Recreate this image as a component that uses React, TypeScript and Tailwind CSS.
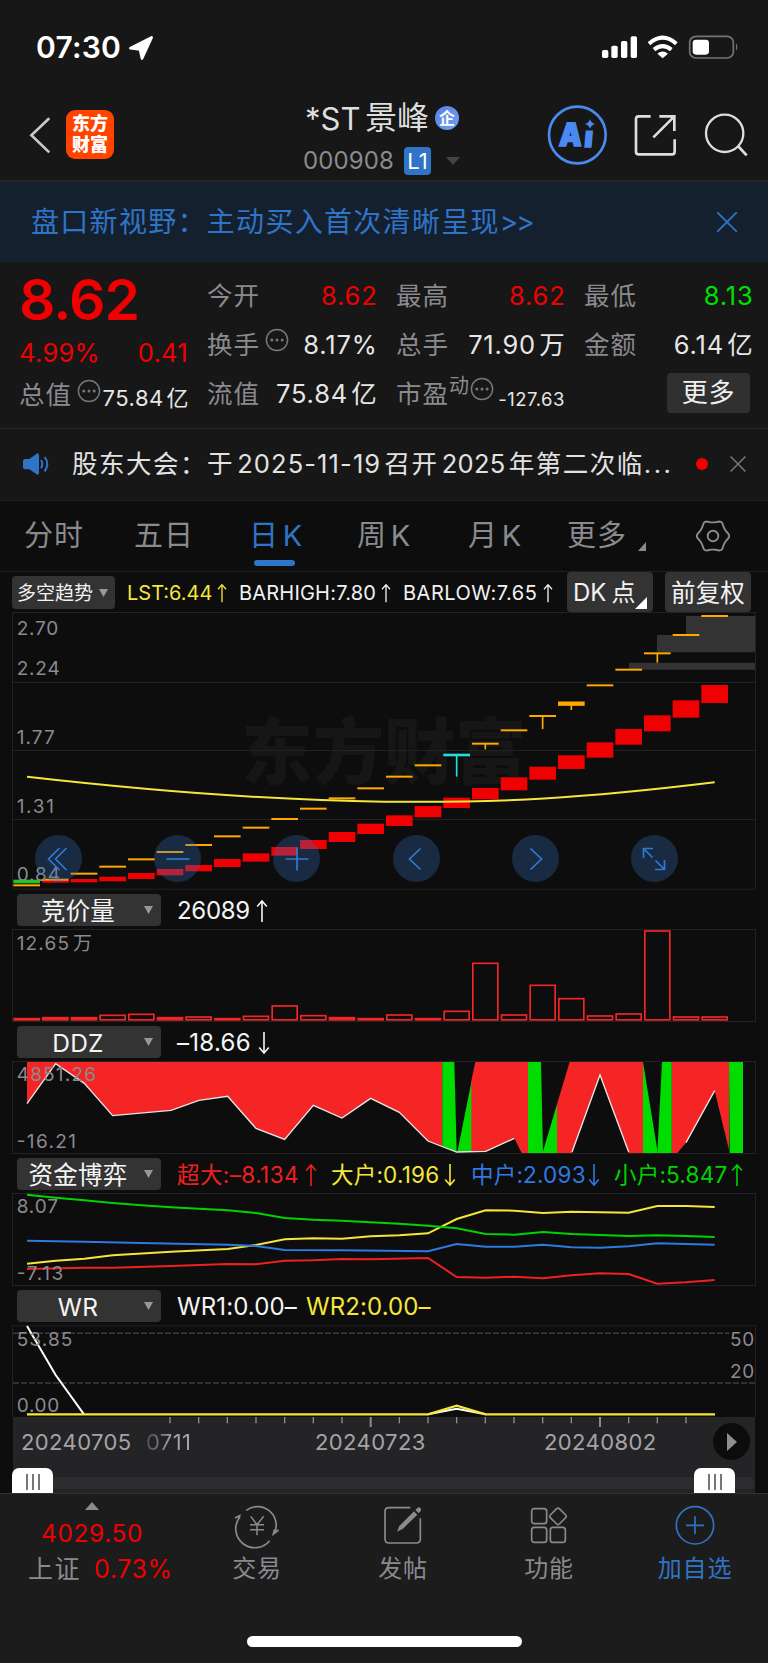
import React from "react";

const ORANGE_Y = [1156, 1139, 1121, 1100, 1078, 1056, 1035, 1009, 983, 957, 926, 895, 865, 830, 796, 765, 731, 691, 648, 611, 556, 509, 460, 405, 348];
const STEMS: Record<number, number> = { 15: 830, 16: 748, 18: 687, 19: 630, 22: 488 };
const TREND: [number, number][] = [
  [1139, 1150], [1139, 1148], [1137, 1147], [1130, 1144], [1119, 1137], [1107, 1126], [1095, 1114], [1077, 1101], [1060, 1085],
  [1041, 1067], [1020, 1047], [996, 1026], [971, 1002], [946, 978], [918, 952], [893, 924], [864, 898], [832, 871], [800, 839],
  [766, 807], [727, 773], [687, 734], [646, 694], [601, 653], [555, 609],
];
const VOLUME = [384, 381, 381, 374, 371, 381, 379, 384, 377, 346, 375, 381, 384, 373, 384, 362, 218, 373, 284, 324, 376, 370, 121, 379, 379];
const cx = (i: number) => 80 + 86 * i;

const GEAR = Array.from({ length: 72 }, (_, k) => {
  const a = (k * Math.PI) / 36;
  const r = 14.7 + 1.3 * Math.cos(6 * a) + 0.25 * Math.cos(12 * a);
  return `${(17 + r * Math.cos(a)).toFixed(2)},${(17 + r * Math.sin(a)).toFixed(2)}`;
}).join(" ");

const label = "fill-[#8a8a8f]";
const sans = "Inter, 'Noto Sans CJK SC', sans-serif";

function Txt({ x, y, w, size = 57, fill, children }: { x: number; y: number; w?: number; size?: number; fill?: string; children: string }) {
  return (
    <text x={x} y={y} fontSize={size} fontFamily={sans} textLength={w} className={fill ?? label}>
      {children}
    </text>
  );
}

function Frame({ top, bottom }: { top: number; bottom: number }) {
  return <rect x={37.5} y={top} width={2229} height={bottom - top} fill="none" stroke="#222224" strokeWidth={3} />;
}

function Dots({ className = "" }: { className?: string }) {
  return (
    <svg viewBox="0 0 24 24" className={"h-6 w-6 shrink-0 text-[#77777b] " + className} fill="none" stroke="currentColor" strokeWidth={1.5}>
      <circle cx={12} cy={12} r={10.6} />
      <g fill="currentColor" stroke="none">
        <circle cx={6.8} cy={12} r={1.5} />
        <circle cx={12} cy={12} r={1.5} />
        <circle cx={17.2} cy={12} r={1.5} />
      </g>
    </svg>
  );
}

function Arrow({ down = false, className = "h-6 w-3" }: { down?: boolean; className?: string }) {
  return (
    <svg viewBox="0 0 12 24" className={"shrink-0 " + className} fill="none" stroke="currentColor" strokeWidth={1.6}>
      {down ? <path d="M6 1v21M1.2 16.5 6 22l4.8-5.5" /> : <path d="M6 23V2M1.2 7.5 6 2l4.8 5.5" />}
    </svg>
  );
}

function StatusBar() {
  return (
    <div className="flex h-[92px] items-start justify-between pl-9 pr-7 pt-[32px] text-white">
      <div className="flex items-center">
        <span className="w-[91px] text-[30px] font-semibold leading-[30px] tracking-[0.2px]">07:30</span>
        <svg viewBox="384 102 78 80" className="ml-px h-[27px] w-[26px]" fill="white" stroke="white" strokeWidth={8} strokeLinejoin="round">
          <path d="M391 144 455 112 426 175 420 148Z" />
        </svg>
      </div>
      <svg viewBox="1800 102 420 78" className="mt-[2px] h-[26px] w-[140px]" fill="white">
        <rect x={1806} y={150} width={19} height={24} rx={5} />
        <rect x={1834} y={137} width={19} height={37} rx={5} />
        <rect x={1863} y={123} width={19} height={51} rx={5} />
        <rect x={1892} y={109} width={19} height={65} rx={5} />
        <g fill="none" stroke="white" strokeWidth={12}>
          <path d="M1947 131Q1988 95 2029 131" />
          <path d="M1962 149Q1988 128 2014 149" />
        </g>
        <path d="M1972 161Q1988 148 2004 161L1988 175Z" />
        <rect x={2069} y={109} width={131} height={65} rx={19} fill="none" stroke="#747474" strokeWidth={5} />
        <rect x={2078} y={119} width={49} height={45} rx={10} />
        <path d="M2208 129Q2216 141 2208 153Z" fill="#747474" />
      </svg>
    </div>
  );
}

function Header() {
  return (
    <header className="flex h-[88px] items-start text-[#dedede]">
      <svg viewBox="84 348 72 118" className="ml-[28px] mt-[24px] h-[39px] w-6" fill="none" stroke="#c9c9c9" strokeWidth={8}>
        <path d="M148 355 94 406 148 458" />
      </svg>
      <div className="ml-[14px] mt-[18px] flex h-[49px] w-[48px] flex-col items-center justify-center rounded-[9px] bg-[#ff4400] text-[18px] font-black leading-[20.5px] text-white">
        <span>东方</span>
        <span>财富</span>
      </div>
      <div className="ml-[180px] w-[180px] pt-[9px]">
        <div className="flex h-[34px] items-center pl-[11px]">
          <span className="w-[60px] text-[31px] leading-none">*ST</span>
          <span className="text-[32px] leading-none">景峰</span>
          <span className="ml-[6px] flex h-6 w-6 items-center justify-center rounded-full bg-gradient-to-br from-[#5b7fe6] to-[#6fa0f2] text-[16px] font-bold leading-none text-white">企</span>
        </div>
        <div className="mt-[12px] flex h-7 items-center pl-[9px]">
          <span className="w-[101px] text-[24px] leading-none tracking-[0.1px] text-[#8a8a8f]">000908</span>
          <span className="flex h-7 w-[27px] items-center justify-center rounded-[4px] bg-[#2f74c6] text-[22px] leading-none text-white">L1</span>
          <svg viewBox="0 0 14 8" className="ml-[15px] h-2 w-[14px] fill-[#444]"><path d="M0 0H14L7 8Z" /></svg>
        </div>
      </div>
      <svg viewBox="1641 315 180 180" className="ml-[73px] mt-[13px] h-[60px] w-[60px]">
        <circle cx={1732} cy={405} r={85} fill="none" stroke="#4a8af0" strokeWidth={8} />
        <g fill="#4a8af0" stroke="#4a8af0" strokeWidth={5} fontFamily={sans} fontWeight={900}>
          <text x={1676} y={437} fontSize={96} textLength={68} lengthAdjust="spacingAndGlyphs" transform="skewX(-3) translate(23 0)">A</text>
          <text x={1752} y={440} fontSize={86} transform="skewX(-5) translate(38 0)">ı</text>
        </g>
        <path d="M1770 357Q1773 369 1785 372Q1773 375 1770 387Q1767 375 1755 372Q1767 369 1770 357Z" fill="#4a8af0" />
      </svg>
      <svg viewBox="1896 339 138 138" className="ml-[25px] mt-[21px] h-[46px] w-[46px]" fill="none" stroke="#dedede" strokeWidth={8}>
        <path d="M1952 349H1916Q1908 349 1908 357V455Q1908 463 1916 463H2016Q2024 463 2024 455V418M1978 349H2023V393M2023 349 1960 412" />
      </svg>
      <svg viewBox="2109 333 138 138" className="ml-[25px] mt-[19px] h-[46px] w-[46px]" fill="none" stroke="#dedede" strokeWidth={7}>
        <circle cx={2174} cy={400} r={56} />
        <path d="M2214 438 2240 466" strokeWidth={8} />
      </svg>
    </header>
  );
}

function Pair({ name, value, color = "text-[#e6e6e6]", dots = false }: { name: string; value: string; color?: string; dots?: boolean }) {
  return (
    <div className="flex h-[49px] items-center justify-between text-[25.5px] leading-none">
      <span className="flex items-center tracking-[1px] text-[#8a8a8f]">
        {name}
        {dots && <Dots className="-mt-[9px] ml-[5px]" />}
      </span>
      <span className={"-mr-[1.5px] tracking-[0.8px] " + color}>{value}</span>
    </div>
  );
}

function Quote() {
  return (
    <section className="flex h-[167px] border-b border-[#262626] pl-[19px] pt-[9px]">
      <div className="w-[169px]">
        <div className="h-[58px] text-[57px] font-semibold leading-[58px] tracking-[-0.9px] text-[#f00000]">8.62</div>
        <div className="flex h-12 items-center justify-between text-[25.5px] leading-none tracking-[0.3px] text-[#f00000]">
          <span>4.99%</span>
          <span>0.41</span>
        </div>
        <div className="flex h-9 items-center leading-none">
          <span className="flex items-center text-[25.5px] tracking-[1px] text-[#8a8a8f]">
            总值
            <Dots className="-mt-[9px] ml-[5px]" />
          </span>
          <span className="-mr-px ml-auto mt-[5px] text-[22px] tracking-[0.5px] text-[#e6e6e6]">75.84亿</span>
        </div>
      </div>
      <div className="ml-[19px] w-[169px]">
        <Pair name="今开" value="8.62" color="text-[#f00000]" />
        <Pair name="换手" value="8.17%" dots />
        <Pair name="流值" value="75.84亿" />
      </div>
      <div className="ml-[20px] w-[168px]">
        <Pair name="最高" value="8.62" color="text-[#f00000]" />
        <Pair name="总手" value="71.90万" />
        <div className="flex h-[49px] items-center leading-none text-[#8a8a8f]">
          <span className="text-[25.5px] tracking-[1px]">市盈</span>
          <span className="-mt-[15px] text-[20px]">动</span>
          <Dots className="-mt-[9px] ml-[1px]" />
          <span className="-mr-px ml-auto mt-[11px] text-[18.5px] tracking-[0.5px] text-[#e6e6e6]">-127.63</span>
        </div>
      </div>
      <div className="ml-[20px] w-[168px]">
        <Pair name="最低" value="8.13" color="text-[#00e000]" />
        <Pair name="金额" value="6.14亿" />
        <button className="ml-[83px] mt-[4px] flex h-10 w-[83px] items-center justify-center rounded-[4px] bg-[#303030] text-[26px] leading-none tracking-[0.8px] text-[#f0f0f0]">更多</button>
      </div>
    </section>
  );
}

function Tabs() {
  return (
    <nav className="flex h-[71px] items-center border-b border-[#202022] bg-[#0d0d0d] pb-[1px] pl-[24px] text-[29px] leading-none tracking-[1px] text-[#8a8a8f]">
      <span className="w-[110px]">分时</span>
      <span className="w-[115px]">五日</span>
      <span className="relative w-[108px] text-[#2f74c6]">
        日K
        <span className="absolute left-[5px] top-[39px] h-[6px] w-[41px] rounded-full bg-[#2f74c6]" />
      </span>
      <span className="w-[111px]">周K</span>
      <span className="w-[99px]">月K</span>
      <span className="w-[71px]">更多</span>
      <svg viewBox="0 0 8 9" className="mt-[22px] h-[9px] w-2 fill-[#8a8a8f]"><path d="M8 0V9H0Z" /></svg>
      <svg viewBox="0 0 34 34" className="ml-[50px] h-[34px] w-[34px]" fill="none" stroke="#8a8a8f" strokeWidth={1.9} strokeLinejoin="round">
        <polygon points={GEAR} />
        <circle cx={17} cy={17} r={5.3} />
      </svg>
    </nav>
  );
}

function IndicatorRow() {
  return (
    <div className="flex h-10 items-center text-[20px] leading-none tracking-[0.1px] text-[#f2f2f2]">
      <button className="ml-3 flex h-[33px] w-[103px] items-center rounded-[4px] bg-[#333] pl-[5px] pt-[2px] text-[19px] tracking-[0px]">
        多空趋势
        <svg viewBox="0 0 9 8" className="ml-[6px] h-2 w-[9px] fill-[#98989c]"><path d="M0 0H9L4.5 8Z" /></svg>
      </button>
      <span className="ml-3 flex w-[112px] items-center pt-[2px] text-[#f5e63c]"><span className="w-[90px] tracking-[0px]">LST:6.44</span><Arrow className="h-5 w-[10px]" /></span>
      <span className="flex w-[164px] items-center pt-[2px]"><span className="w-[142px] tracking-[0.2px]">BARHIGH:7.80</span><Arrow className="h-5 w-[10px]" /></span>
      <span className="flex w-[164px] items-center pt-[2px]"><span className="w-[140px] tracking-[0.5px]">BARLOW:7.65</span><Arrow className="h-5 w-[10px]" /></span>
      <button className="flex h-10 w-[86px] items-center rounded-[4px] bg-[#333] pl-[6px] pt-[2px] text-[24px] tracking-normal">
        <span>DK</span><span className="ml-[5px]">点</span>
        <svg viewBox="0 0 12 12" className="-mr-2 mt-5 h-3 w-3 fill-white"><path d="M12 0V12H0Z" /></svg>
      </button>
      <button className="ml-3 h-10 w-[86px] rounded-[4px] bg-[#333] pt-[2px] text-[24.5px] tracking-[0.2px]">前复权</button>
    </div>
  );
}

function ToolButton({ children }: { children: React.ReactNode }) {
  return (
    <button className="flex h-[47px] w-[47px] items-center justify-center rounded-full bg-[#3171be]/30">
      <svg viewBox="0 0 24 24" className="h-6 w-6" fill="none" stroke="#2f7ad0" strokeWidth={1.7}>{children}</svg>
    </button>
  );
}

function MainChart() {
  return (
    <div className="relative h-[278px]">
      <svg viewBox="0 336 2304 834" className="block h-[278px] w-full">
        <text x={724} y={833} fontSize={214} fontWeight={900} fontFamily={sans} textLength={856} fill="#161616">东方财富</text>
        <Frame top={337.5} bottom={1167.5} />
        <path d="M39 547.5H2265M39 751.5H2265M39 958.5H2265" stroke="#222224" strokeWidth={3} />
        <path d="M2058 348H2265V457H1971V405H2058Z M1887 488H2265V509H1887Z" fill="#333" />
        {TREND.map(([t, b], i) => (
          <rect key={i} x={cx(i) - 40} y={t} width={80} height={b - t} fill={i === 0 ? "#1fc81f" : "#f00000"} />
        ))}
        {ORANGE_Y.map((y, i) => {
          const h = i === 19 ? 13 : i === 15 ? 8 : 6;
          const c = i === 15 ? "#22dede" : "#ffa800";
          return (
            <g key={i} fill={c}>
              <rect x={cx(i) - 40} y={y - h / 2} width={80} height={h} />
              {STEMS[i] && <rect x={cx(i) - 2.5} y={y} width={5} height={STEMS[i] - y} />}
            </g>
          );
        })}
        <path d="M81 830C390 865 800 901 1152 905S1750 895 2144 847" fill="none" stroke="#f5e63c" strokeWidth={6} />
        <Txt x={50} y={405} w={125}>2.70</Txt>
        <Txt x={50} y={525} w={129}>2.24</Txt>
        <Txt x={50} y={732} w={114}>1.77</Txt>
        <Txt x={50} y={938} w={112}>1.31</Txt>
        <Txt x={50} y={1144} w={130}>0.84</Txt>
      </svg>
      <div className="absolute left-[35px] top-[223px] flex gap-[72.2px]">
        <ToolButton><path d="M12.5 1 1.5 12 12.5 23M19.5 1 8.5 12 19.5 23" /></ToolButton>
        <ToolButton><path d="M.5 12H23.5" /></ToolButton>
        <ToolButton><path d="M.5 12H23.5M12 .5V23.5" /></ToolButton>
        <ToolButton><path d="M16.5 1.5 5.5 12 16.5 22.5" /></ToolButton>
        <ToolButton><path d="M7.5 1.5 18.5 12 7.5 22.5" /></ToolButton>
        <ToolButton><path d="M11 1.5H1.5V11M1.5 1.5 10.5 10.5M13 22.5H22.5V13M22.5 22.5 13.5 13.5" /></ToolButton>
      </div>
    </div>
  );
}

function PanelTitle({ name, children }: { name: string; children: React.ReactNode }) {
  return (
    <div className="flex h-[39px] items-start pl-[17px] pt-[4px] text-[24px] leading-none text-[#f5f5f5]">
      <button className="flex h-8 w-[144px] shrink-0 items-center rounded-[4px] bg-[#333]">
        <span className="w-[122px] pt-[2px] text-center text-[24.5px] tracking-[0.2px]">{name}</span>
        <svg viewBox="0 0 9 8" className="ml-[5px] h-2 w-[9px] fill-[#98989c]"><path d="M0 0H9L4.5 8Z" /></svg>
      </button>
      <div className="ml-4 flex h-8 items-center pt-[2px]">{children}</div>
    </div>
  );
}

function VolumePanel() {
  return (
    <svg viewBox="0 117 2304 279" className="block h-[93px] w-full">
      <Frame top={118.5} bottom={394.5} />
      {VOLUME.map((t, i) => (
        <rect key={i} x={cx(i) - 37.5} y={t + 2} width={75} height={Math.max(389.5 - t - 2, 2)} fill={t > 380 ? "#f52525" : "none"} stroke="#f52525" strokeWidth={5} />
      ))}
      <Txt x={50} y={180} w={157}>12.65</Txt>
      <Txt x={219} y={180}>万</Txt>
    </svg>
  );
}

function DdzPanel() {
  return (
    <svg viewBox="0 513 2304 279" className="block h-[93px] w-full">
      <Frame top={514.5} bottom={790.5} />
      <g fill="#f52525">
        <path d="M81 516H1327V768L1284 753 1198 667 1112 625 1026 684 940 646 854 748 768 715 683 619 597 631 513 661 338 677 253 580 167 521 81 641Z" />
        <path d="M1426 516H1584V789H1565L1543 745 1457 784 1413 786V577Z" />
        <path d="M1709 516H1929V789H1886L1800 555 1716 789H1671V643Z" />
        <path d="M2015 516H2187V780L2144 602 2058 758 2032 789H2015Z" />
      </g>
      <g fill="#00dc00">
        <path d="M1327 516H1363L1370 786 1327 768Z" />
        <path d="M1372 786 1414 577V786Z" />
        <path d="M1584 516H1623L1629 789H1584Z" />
        <path d="M1629 784 1671 643V789H1629Z" />
        <path d="M1929 516 1972 780V789H1929Z" />
        <path d="M1986 516H2015V789H1972Z" />
        <path d="M2187 516H2229V789H2189Z" />
      </g>
      <g fill="none" stroke="#e6e6e6" strokeWidth={4}>
        <path d="M81 641 167 521 253 580 338 677 513 661 597 631 683 619 768 715 854 748 940 646 1026 684 1112 625 1198 667 1284 753 1370 786 1457 784 1543 745" />
        <path d="M1716 786 1800 555 1886 786M2058 758 2144 602" />
      </g>
      <Txt x={50} y={574} w={238}>4851.26</Txt>
      <Txt x={50} y={773} w={178}>-16.21</Txt>
    </svg>
  );
}

function FundPanel() {
  return (
    <svg viewBox="0 909 2304 279" className="block h-[93px] w-full">
      <Frame top={910.5} bottom={1186.5} />
      <g fill="none" strokeWidth={6}>
        <polyline stroke="#f5e63c" points="81,1121 167,1112 253,1106 338,1096 513,1085 683,1077 768,1065 854,1048 940,1045 1026,1046 1112,1039 1198,1036 1284,1030 1370,987 1457,961 1543,962 1629,969 1715,965 1800,967 1886,968 1972,948 2058,948 2144,951" />
        <polyline stroke="#00d400" points="81,914 167,923 253,931 338,939 425,946 513,952 597,956 683,961 768,969 854,984 940,989 1026,992 1112,997 1198,1001 1284,1007 1370,1015 1457,1032 1543,1034 1629,1026 1715,1032 1800,1035 1886,1038 1972,1036 2058,1038 2144,1041" />
        <polyline stroke="#2f7ae0" points="81,1052 253,1055 425,1059 683,1064 768,1068 854,1080 1026,1081 1284,1084 1370,1062 1457,1070 1543,1070 1629,1064 1715,1072 1800,1073 1886,1069 1972,1060 2144,1064" />
        <polyline stroke="#f02020" points="81,1137 253,1133 338,1133 513,1128 683,1122 768,1123 854,1112 940,1111 1026,1107 1112,1108 1284,1104 1370,1161 1457,1163 1543,1160 1629,1165 1715,1156 1800,1150 1886,1152 1972,1181 2058,1177 2144,1170" />
      </g>
      <Txt x={50} y={970} w={124}>8.07</Txt>
      <Txt x={50} y={1169} w={140}>-7.13</Txt>
    </svg>
  );
}

function WrPanel() {
  return (
    <svg viewBox="0 135 2304 276" className="block h-[92px] w-full">
      <path d="M37.5 411V137.5H2266.5V411" fill="none" stroke="#222224" strokeWidth={3} />
      <path d="M39 160H2188M39 309H2265" stroke="#3c3c3e" strokeWidth={4.5} strokeDasharray="18 6" />
      <path d="M81 138 167 285 252 403M1284 403 1370 386 1457 403" fill="none" stroke="#fff" strokeWidth={6} />
      <path d="M81 403H1284L1370 377 1457 403H2145" fill="none" stroke="#f5e63c" strokeWidth={7} />
      <Txt x={50} y={198} w={167}>53.85</Txt>
      <Txt x={50} y={396} w={128}>0.00</Txt>
      <Txt x={2190} y={198} w={73}>50</Txt>
      <Txt x={2190} y={294} w={73}>20</Txt>
    </svg>
  );
}

function Grip() {
  return (
    <div className="flex h-[25px] w-[41px] items-center justify-center gap-1 rounded-t-[7px] bg-white pt-[3px]">
      <span className="h-4 w-[2px] bg-[#777]" />
      <span className="h-4 w-[2px] bg-[#777]" />
      <span className="h-4 w-[2px] bg-[#777]" />
    </div>
  );
}

function DateAxis() {
  return (
    <div className="ml-[13px] mr-[13px] flex h-[76px] flex-col bg-[#242426]">
      <svg viewBox="39 411 2226 33" className="block h-[11px] w-full shrink-0" fill="#8a8a8f">
        {Array.from({ length: 19 }, (_, k) => k + 5).map((i) => {
          const major = i === 12 || i === 20;
          return <rect key={i} x={cx(i) - (major ? 3 : 2)} y={411} width={major ? 6 : 4} height={major ? 30 : 19} />;
        })}
      </svg>
      <div className="flex h-[27px] items-center text-[22px] leading-none tracking-[0.4px] text-[#a4a4a8]">
        <span className="w-[124px] pl-[8px]">20240705</span>
        <span className="w-[178px] bg-gradient-to-r from-[#333] via-[#a4a4a8] via-20% to-[#a4a4a8] bg-clip-text pl-[9px] text-transparent">0711</span>
        <span className="w-[229px]">20240723</span>
        <span className="w-[169px]">20240802</span>
        <span className="flex h-[37px] w-[37px] shrink-0 items-center justify-center rounded-full bg-[#0c0c0c]">
          <svg viewBox="0 0 10 18" className="h-[18px] w-[10px] fill-[#8e8e92]"><path d="M0 0 10 9 0 18Z" /></svg>
        </span>
      </div>
      <div className="mt-[13px] flex h-[25px] items-start justify-between">
        <div className="-ml-px"><Grip /></div>
        <div className="mt-[9px] h-3 grow bg-[#2d2d2f]" />
        <Grip />
        <div className="mt-[9px] h-3 w-5 rounded-r-full bg-[#2d2d2f]" />
      </div>
    </div>
  );
}

function NavItem({ text, active = false, children }: { text: string; active?: boolean; children: React.ReactNode }) {
  return (
    <div className={"flex w-[146px] flex-col items-center pt-[12px] leading-none " + (active ? "text-[#2f74c6]" : "text-[#8a8a8f]")}>
      <svg viewBox="0 0 120 120" className="h-10 w-10 overflow-visible" fill="none" stroke="currentColor" strokeWidth={5}>{children}</svg>
      <span className="mt-[11px] text-[24px] tracking-[0.8px]">{text}</span>
    </div>
  );
}

function BottomBar() {
  return (
    <footer className="flex h-[170px] flex-col border-t border-[#323234] bg-[#1c1c1c]">
      <div className="flex h-[142px]">
        <div className="flex w-[184px] flex-col items-center pt-2 leading-none">
          <svg viewBox="0 0 14 8" className="h-2 w-[14px] fill-[#8a8a8f]"><path d="M7 0 14 8H0Z" /></svg>
          <span className="mt-[11px] text-[24.5px] tracking-[0.6px] text-[#f00000]">4029.50</span>
          <div className="mt-[11px] flex self-start pl-[28px] text-[25px]">
            <span className="w-[53px] tracking-[1.5px] text-[#8a8a8f]">上证</span>
            <span className="ml-[13px] w-[84px] tracking-[0.6px] text-[#f00000]">0.73%</span>
          </div>
        </div>
        <NavItem text="交易">
          <path d="M28 13A56 56 0 0 1 113 80M98 104A56 56 0 0 1 9 32M-6 36 8 29 5 39M125 72 109 84 113 70" />
          <path d="M41 31 60 56 80 31M60 56V88M39 56H81M39 71H81" strokeWidth={4.5} />
        </NavItem>
        <NavItem text="发帖">
          <path d="M82 5H18Q6 5 6 17V99Q6 111 18 111H100Q112 111 112 99V37" />
          <path d="M42 77 49 60 93 16 103 26 60 68ZM97 12 104 5Q108 2 112 6T113 15L107 22Z" fill="currentColor" stroke="none" />
        </NavItem>
        <NavItem text="功能">
          <rect x={8} y={8} width={45} height={45} rx={8} />
          <rect x={8} y={64} width={45} height={45} rx={8} />
          <rect x={64} y={64} width={45} height={45} rx={8} />
          <path d="M83 8Q87 4 91 8L110 27Q114 31 110 35L91 54Q87 58 83 54L64 35Q60 31 64 27Z" />
        </NavItem>
        <NavItem text="加自选" active>
          <circle cx={60} cy={58} r={56} />
          <path d="M33 58H87M60 31V85" />
        </NavItem>
      </div>
      <div className="mx-auto h-[11px] w-[275px] rounded-full bg-white" />
    </footer>
  );
}

export default function App() {
  return (
    <div className="flex h-[1663px] w-[768px] flex-col overflow-hidden whitespace-nowrap bg-[#0d0d0d] font-['Inter','Noto_Sans_CJK_SC',sans-serif] [text-autospace:normal]">
      <div className="bg-[#171717]">
        <StatusBar />
        <Header />
        <div className="flex h-[82px] items-center justify-between border-t-2 border-[#262626] bg-[#15202f] pl-[31px] pr-[31px] text-[28px] leading-none tracking-[1.3px] text-[#2f74c6]">
          <span>盘口新视野：主动买入首次清晰呈现<span className="tracking-[-2px]">&gt;&gt;</span></span>
          <svg viewBox="0 0 20 20" className="h-5 w-5" fill="none" stroke="#2f74c6" strokeWidth={1.8}><path d="M0 0 20 20M20 0 0 20" /></svg>
        </div>
        <Quote />
        <div className="flex h-[72px] items-center border-b border-[#202022] pb-px text-[25.5px] leading-none text-[#e2e2e2]">
          <svg viewBox="66 576 84 72" className="ml-[22px] h-6 w-7" fill="none" stroke="#2f74c6" strokeWidth={6}>
            <path d="M72 597H88L112 580Q117 580 117 586V638Q117 644 112 644L88 628H76Q69 628 69 620V604Q69 597 76 597Z" fill="#2f74c6" stroke="none" />
            <path d="M123 600Q131 612 123 625M134 591Q150 612 134 634" />
          </svg>
          <span className="ml-[22px] w-[602px] tracking-[1.5px]">股东大会：于<span className="tracking-[1.1px]">2025-11-19</span>召开<span className="tracking-[0.3px]">2025</span>年第二次临<span className="tracking-[2.5px]">...</span></span>
          <span className="ml-[22px] h-3 w-3 rounded-full bg-[#f00000]" />
          <svg viewBox="0 0 16 16" className="ml-[22px] h-4 w-4" fill="none" stroke="#77777b" strokeWidth={1.5}><path d="M.5 .5 15.5 15.5M15.5 .5 .5 15.5" /></svg>
        </div>
      </div>
      <Tabs />
      <IndicatorRow />
      <MainChart />
      <PanelTitle name="竞价量"><span className="w-[79px] tracking-[-0.3px]">26089</span><Arrow /></PanelTitle>
      <VolumePanel />
      <PanelTitle name="DDZ"><span className="w-[81px] tracking-[0.3px]">–18.66</span><Arrow down /></PanelTitle>
      <DdzPanel />
      <PanelTitle name="资金博弈">
        <div className="flex items-center text-[22.5px] tracking-[0.2px]">
          <span className="flex w-[154px] items-center tracking-[0.4px] text-[#f02020]"><span className="w-[128px]">超大:–8.134</span><Arrow /></span>
          <span className="flex w-[140px] items-center text-[#f5e63c]"><span className="w-[113px]">大户:0.196</span><Arrow down /></span>
          <span className="flex w-[143px] items-center text-[#2f7ae0]"><span className="w-[117px]">中户:2.093</span><Arrow down /></span>
          <span className="flex items-center text-[#00d400]"><span className="w-[117px]">小户:5.847</span><Arrow /></span>
        </div>
      </PanelTitle>
      <FundPanel />
      <PanelTitle name="WR">
        <span className="w-[129px] tracking-[0.1px]">WR1:0.00–</span>
        <span className="tracking-[0.1px] text-[#f5e63c]">WR2:0.00–</span>
      </PanelTitle>
      <WrPanel />
      <DateAxis />
      <BottomBar />
    </div>
  );
}
